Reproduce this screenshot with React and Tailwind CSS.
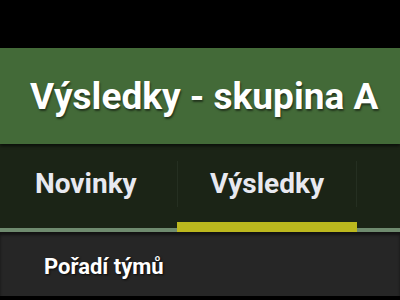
export default function App() {
  return (
    <div className="w-[400px] h-[300px] bg-black overflow-hidden font-['Roboto',sans-serif]">
      <div className="h-12 bg-black" />
      <div className="h-24 bg-[#436a38] flex items-center pl-[30px] shadow-[0_2px_3px_rgba(0,0,0,0.6)] relative z-10">
        <h1 className="text-[37px] font-bold text-white leading-none [text-shadow:1px_2px_2px_rgba(0,0,0,0.5)]">
          Výsledky - skupina A
        </h1>
      </div>
      <div className="h-[88px] bg-[#1b2416] flex flex-col">
        <div className="flex flex-1 items-center pb-1">
          <div className="w-[177px] pl-[35px]">
            <span className="text-[28px] font-bold text-[#e8e9f0]">Novinky</span>
          </div>
          <div className="w-[180px] h-[46px] flex items-center justify-center border-l border-r border-[#252f21]">
            <span className="text-[28px] font-bold text-[#e8e9f0]">Výsledky</span>
          </div>
        </div>
        <div className="flex h-1 bg-[#6f8b6f]">
          <div className="ml-[177px] w-[180px] h-[10px] -mt-[6px] bg-[#bcb81e]" />
        </div>
      </div>
      <div className="h-16 bg-[#262626] flex items-center pl-[44px] pt-1 shadow-[inset_0_3px_3px_rgba(0,0,0,0.5)]">
        <span className="text-[22px] font-bold text-white [text-shadow:1px_1px_2px_rgba(0,0,0,0.8)]">Pořadí týmů</span>
      </div>
    </div>
  );
}
